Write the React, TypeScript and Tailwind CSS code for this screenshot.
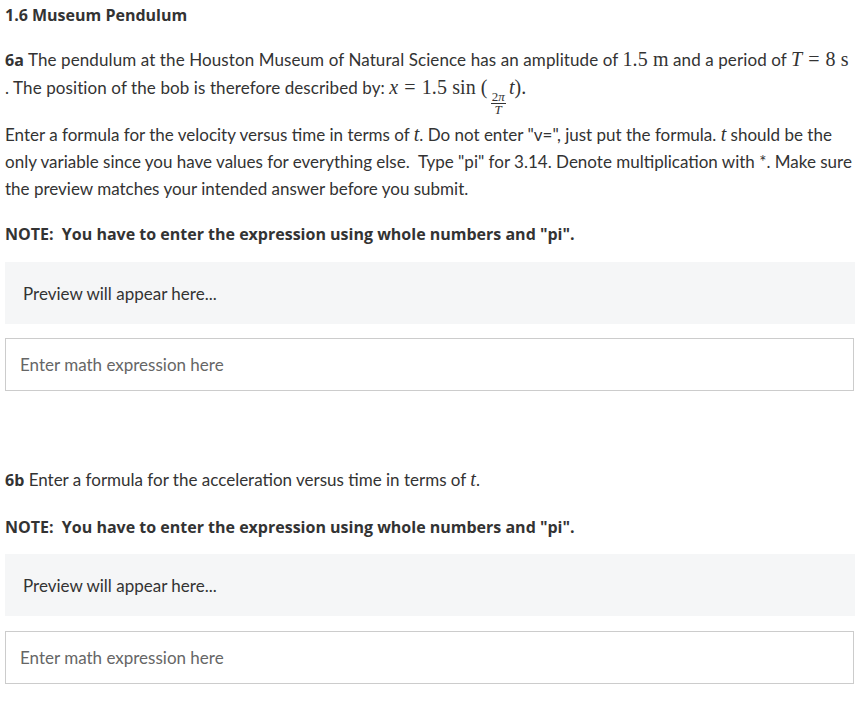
import React from "react";

function M({ children }: { children: React.ReactNode }) {
  return <span className="font-['Liberation_Serif',serif] text-[20px] leading-none text-[#333]">{children}</span>;
}

function Eq() {
  return <span className="mx-[6px]">=</span>;
}

function Frac() {
  return (
    <span className="inline-flex flex-col items-center align-[-7px] mx-[3px] leading-[12px] text-[13px]">
      <span className="px-[1px] border-b border-[#333]">2<i>π</i></span>
      <span><i>T</i></span>
    </span>
  );
}

function Preview() {
  return (
    <div className="h-[62px] bg-[#f5f6f7] flex items-center pl-[18px] text-[17px] text-[#333] mr-[7px]">
      Preview will appear here...
    </div>
  );
}

function Input() {
  return (
    <div className="h-[53px] border border-[#cccccc] flex items-center pl-[14px] text-[17px] text-[#666] mr-[8px]">
      Enter math expression here
    </div>
  );
}

export default function App() {
  return (
    <div className="bg-white w-[867px] h-[718px] px-[5px] text-[#333] font-['Lato',sans-serif] text-[17px] leading-[27px]">
      <div className="pt-[3px] font-['Open_Sans',sans-serif] font-bold text-[16px] leading-[24px]">1.6 Museum Pendulum</div>
      <div className="mt-[19px] whitespace-nowrap tracking-[0.1px]">
        <div className="h-[28px]">
          <b className="font-['Open_Sans',sans-serif] text-[16px]">6a</b> The pendulum at the Houston Museum of Natural Science has an amplitude of{" "}
          <M>1.5 m</M> and a period of{" "}
          <M><i>T</i><Eq />8 s</M>
        </div>
        <div className="h-[27px]">
          . The position of the bob is therefore described by:{" "}
          <M><i>x</i><Eq />1.5 sin (<Frac /><i>t</i>).</M>
        </div>
      </div>
      <div className="mt-[20px] whitespace-nowrap">
        Enter a formula for the velocity versus time in terms of <M><i>t</i></M>. Do not enter "v=", just put the formula. <M><i>t</i></M> should be the
        <br />only variable since you have values for everything else.&nbsp; Type "pi" for 3.14. Denote multiplication with *. Make sure
        <br />the preview matches your intended answer before you submit.
      </div>
      <div className="mt-[19px] font-['Open_Sans',sans-serif] font-bold text-[16px]">NOTE:&nbsp; You have to enter the expression using whole numbers and "pi".</div>
      <div className="mt-[14px]"><Preview /></div>
      <div className="mt-[14px]"><Input /></div>
      <div className="mt-[75px]">
        <b className="font-['Open_Sans',sans-serif] text-[16px]">6b</b> Enter a formula for the acceleration versus time in terms of <M><i>t</i></M>.
      </div>
      <div className="mt-[20px] font-['Open_Sans',sans-serif] font-bold text-[16px]">NOTE:&nbsp; You have to enter the expression using whole numbers and "pi".</div>
      <div className="mt-[13px]"><Preview /></div>
      <div className="mt-[15px]"><Input /></div>
    </div>
  );
}
